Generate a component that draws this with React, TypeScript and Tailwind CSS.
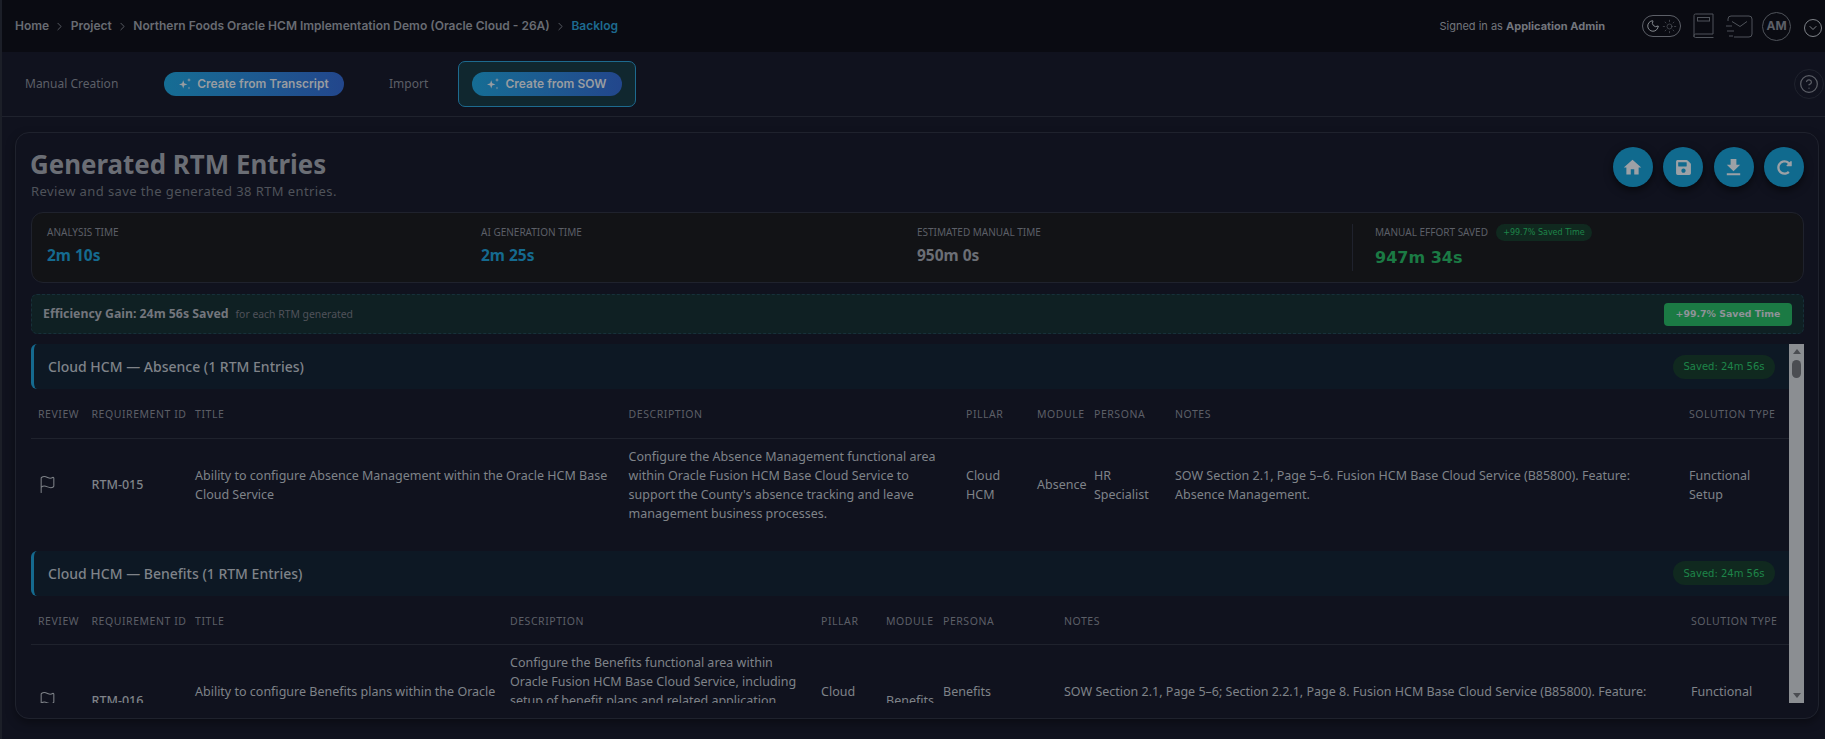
import React from "react";
import { MdHome, MdFileDownload } from "react-icons/md";
import { FaSave, FaRedoAlt } from "react-icons/fa";
import { ChevronRight, ChevronDown, Flag, Moon, Sun, CircleHelp } from "lucide-react";

const ui = "font-['Noto_Sans','Open_Sans',sans-serif]";
const head = "font-['Inter','Liberation_Sans',sans-serif]";
const wide = "font-['DejaVu_Sans',sans-serif]";

function Crumb({ children, last }: { children: React.ReactNode; last?: boolean }) {
  return (
    <>
      <span className={last ? "text-[#1d6a8f]" : "text-[#686b72]"}>{children}</span>
      {!last && <ChevronRight className="mx-[4.3px] text-[#686b72]" size={13} strokeWidth={1.5} />}
    </>
  );
}

function SparkIcon() {
  return (
    <svg width="12" height="12" viewBox="0 0 12 12" fill="currentColor" className="shrink-0">
      <path d="M4.2 2.2L5.2 5.3L8.4 6.4L5.2 7.5L4.2 10.6L3.2 7.5L0 6.4L3.2 5.3Z" />
      <path d="M10 0L10.5 1.5L12 2L10.5 2.5L10 4L9.5 2.5L8 2L9.5 1.5Z" />
      <path d="M10 8.6L10.35 9.65L11.4 10L10.35 10.35L10 11.4L9.65 10.35L8.6 10L9.65 9.65Z" />
    </svg>
  );
}

function GradientButton({ children, w }: { children: React.ReactNode; w: string }) {
  return (
    <div className={`flex h-[24px] items-center justify-center gap-[6px] rounded-full bg-gradient-to-r from-[#156d94] to-[#22468c] text-[12px] font-semibold text-[#989ca1] ${w} ${head}`}>
      <SparkIcon />
      {children}
    </div>
  );
}

function RoundAction({ children }: { children: React.ReactNode }) {
  return (
    <div className="flex h-[40px] w-[40px] items-center justify-center rounded-full bg-[#106a8e] text-[#9ca1a6] shadow-[0_3px_8px_rgba(0,0,0,0.6)]">
      {children}
    </div>
  );
}

function Stat({ label, value, w, color }: { label: string; value: string; w: string; color: string }) {
  return (
    <div className={`${w} pb-[5px]`}>
      <div className="text-[10px] leading-[14px] text-[#5c5f67]">{label}</div>
      <div className={`mt-[6px] text-[15.5px] font-bold leading-[20px] ${color}`}>{value}</div>
    </div>
  );
}

function SectionHead({ title }: { title: string }) {
  return (
    <div className="flex h-[45px] items-center justify-between rounded-l-[6px] border-l-[3px] border-[#156a8f] bg-[#0d1824] pl-[14px] pr-[14px]">
      <span className="text-[14px] font-medium text-[#7f8389]">{title}</span>
      <span className={`flex h-[24px] w-[102px] items-center justify-center rounded-full bg-[#10291f] text-[10px] text-[#1e8549] ${wide}`}>
        Saved: 24m 56s
      </span>
    </div>
  );
}

type Row = { id: string; title: string; desc: string; pillar: string; module: string; persona: string; notes: string; sol: string };
const headers = ["REVIEW", "REQUIREMENT ID", "TITLE", "DESCRIPTION", "PILLAR", "MODULE", "PERSONA", "NOTES", "SOLUTION TYPE"];

function RtmTable({ widths, row }: { widths: number[]; row: Row }) {
  const td = "px-[7px] py-[8px] align-middle";
  return (
    <table className="w-full table-fixed border-collapse text-[12.5px] leading-[19px] text-[#7f8389]">
      <colgroup>
        {widths.map((w, i) => (
          <col key={i} style={{ width: w }} />
        ))}
      </colgroup>
      <thead>
        <tr className="h-[49px] border-b border-[#1f222d]">
          {headers.map((h) => (
            <th key={h} className="overflow-visible whitespace-nowrap px-[7px] pt-[3px] text-left text-[10.5px] font-normal tracking-[0.55px] text-[#5c5f67]">
              {h}
            </th>
          ))}
        </tr>
      </thead>
      <tbody>
        <tr>
          <td className={td}>
            <Flag size={19} strokeWidth={1.3} />
          </td>
          <td className={`${td} font-medium`}>{row.id}</td>
          <td className={td}>{row.title}</td>
          <td className={td}>{row.desc}</td>
          <td className={td}>{row.pillar}</td>
          <td className={td}>{row.module}</td>
          <td className={td}>{row.persona}</td>
          <td className={td}>{row.notes}</td>
          <td className={td}>{row.sol}</td>
        </tr>
      </tbody>
    </table>
  );
}

export default function App() {
  return (
    <div className={`flex h-[739px] w-[1825px] flex-col overflow-hidden border-l-2 border-[#1c1f28] bg-[#10121e] ${ui}`}>
      <header className={`flex h-[52px] shrink-0 items-center bg-[#0a0b12] pl-[13px] pr-[3px] ${head}`}>
        <nav className="flex items-center text-[12px] font-semibold">
          <Crumb>Home</Crumb>
          <Crumb>Project</Crumb>
          <Crumb>Northern Foods Oracle HCM Implementation Demo (Oracle Cloud - 26A)</Crumb>
          <Crumb last>Backlog</Crumb>
        </nav>
        <div className="ml-auto mr-[37px] text-[11px] text-[#73767d]">
          Signed in as <span className="font-bold">Application Admin</span>
        </div>
        <div className="flex h-[22px] w-[39px] items-center justify-center gap-[2px] rounded-full border border-[#5c5f67]">
          <Moon size={14} strokeWidth={1.6} className="text-[#8f9399]" />
          <Sun size={15} strokeWidth={1} className="text-[#5c5f67]" />
        </div>
        <svg className="ml-[12px] text-[#4f535a]" width="21" height="26" viewBox="0 0 21 26" fill="none" stroke="currentColor" strokeWidth="1">
          <path d="M1 24V2.5A1.5 1.5 0 0 1 2.5 1H20V21H2.5A1.5 1.5 0 0 0 1 22.5A1.5 1.5 0 0 0 2.5 24.5H20.5" />
          <rect x="4.5" y="4.5" width="12" height="3.5" />
        </svg>
        <svg className="ml-[12px] text-[#4f535a]" width="27" height="23" viewBox="0 0 27 23" fill="none" stroke="currentColor" strokeWidth="1">
          <path d="M2 6V4A3 3 0 0 1 5 1H23A3 3 0 0 1 26 4V19A3 3 0 0 1 23 22H8" />
          <path d="M6 6.5L14 11.5L21 6.5" />
          <path d="M0 11H6M1 16H8M3 21H7" />
        </svg>
        <div className="ml-[9px] flex h-[29px] w-[29px] items-center justify-center rounded-full border border-[#4f535a] text-[12px] font-bold text-[#5c5f67]">AM</div>
        <div className="ml-[13px] mt-[4px] flex h-[18px] w-[18px] items-center justify-center rounded-full border border-[#7f8389] text-[#7f8389]">
          <ChevronDown size={12} strokeWidth={2} />
        </div>
      </header>

      <div className="flex h-[65px] shrink-0 items-center border-b border-[#1f222d] pl-[23px] pr-[1px] text-[12px]">
        <span className="w-[139px] text-[#5c5f67]">Manual Creation</span>
        <GradientButton w="w-[180px]">Create from Transcript</GradientButton>
        <span className="ml-[45px] w-[69px] text-[#5c5f67]">Import</span>
        <div className="flex h-[46px] w-[178px] items-center justify-center rounded-[7px] border border-[#1d6a8f] bg-[#10272f]">
          <GradientButton w="w-[150px]">Create from SOW</GradientButton>
        </div>
        <div className="ml-auto flex h-[30px] w-[30px] items-center justify-center rounded-full border border-[#1f222d] text-[#5c5f67]">
          <CircleHelp size={20} strokeWidth={1.5} />
        </div>
      </div>

      <main className="mb-[20px] ml-[13px] mr-[6px] mt-[15px] flex min-h-0 flex-1 flex-col rounded-[14px] border border-[#1f222d] pb-[15px] pl-[15px] pr-[14px] shadow-[0_4px_10px_rgba(0,0,0,0.35)]">
        <div className="flex h-[79px] shrink-0 items-start justify-between pt-[13px]">
          <div>
            <h1 className="-ml-[1px] text-[25.9px] font-bold leading-[37px] text-[#6b6e75]">Generated RTM Entries</h1>
            <p className="text-[13px] leading-[16px] tracking-[0.4px] text-[#4f525a]">Review and save the generated 38 RTM entries.</p>
          </div>
          <div className="mt-[1px] flex gap-[10.5px]">
            <RoundAction><MdHome size={21} /></RoundAction>
            <RoundAction><FaSave size={17} /></RoundAction>
            <RoundAction><MdFileDownload size={23} /></RoundAction>
            <RoundAction><FaRedoAlt size={15} /></RoundAction>
          </div>
        </div>

        <div className="flex h-[71px] shrink-0 items-center rounded-[12px] border border-[#1f222d] bg-[#121316] pl-[15px]">
          <Stat w="w-[434px]" label="ANALYSIS TIME" value="2m 10s" color="text-[#156a8f]" />
          <Stat w="w-[436px]" label="AI GENERATION TIME" value="2m 25s" color="text-[#156a8f]" />
          <Stat w="w-[435px]" label="ESTIMATED MANUAL TIME" value="950m 0s" color="text-[#6b6e75]" />
          <div className="flex h-[47px] flex-col justify-start border-l border-[#1f222d] pl-[22px]">
            <div className="flex h-[17px] items-center gap-[8px]">
              <span className="text-[10px] text-[#5c5f67]">MANUAL EFFORT SAVED</span>
              <span className={`flex h-[17px] w-[96px] items-center justify-center rounded-full bg-[#10291f] text-[8px] text-[#1e8549] ${wide}`}>+99.7% Saved Time</span>
            </div>
            <div className={`mt-[6px] text-[16px] font-bold leading-[22px] text-[#1b7a44] ${wide}`}>947m 34s</div>
          </div>
        </div>

        <div className="mt-[11px] flex h-[40px] shrink-0 items-center justify-between rounded-[6px] border border-dashed border-[#17303a] bg-[#0f2023] pl-[11px] pr-[11px]">
          <div className="flex items-baseline gap-[7px]">
            <span className="text-[12.3px] font-bold text-[#73767d]">Efficiency Gain: 24m 56s Saved</span>
            <span className="text-[10.4px] text-[#4f525a]">for each RTM generated</span>
          </div>
          <span className={`flex h-[23px] w-[128px] items-center justify-center rounded-[4px] bg-[#1b7a44] text-[9.4px] font-bold text-[#8f9399] ${wide}`}>+99.7% Saved Time</span>
        </div>

        <div className="mt-[10px] flex min-h-0 flex-1 overflow-hidden">
          <div className="min-w-0 flex-1 overflow-hidden">
            <SectionHead title="Cloud HCM — Absence (1 RTM Entries)" />
            <RtmTable
              widths={[53.5, 103.5, 433.6, 337.4, 71, 57, 81, 514, 107]}
              row={{
                id: "RTM-015",
                title: "Ability to configure Absence Management within the Oracle HCM Base Cloud Service",
                desc: "Configure the Absence Management functional area within Oracle Fusion HCM Base Cloud Service to support the County's absence tracking and leave management business processes.",
                pillar: "Cloud HCM",
                module: "Absence",
                persona: "HR Specialist",
                notes: "SOW Section 2.1, Page 5–6. Fusion HCM Base Cloud Service (B85800). Feature: Absence Management.",
                sol: "Functional Setup",
              }}
            />
            <div className="mt-[20px]">
              <SectionHead title="Cloud HCM — Benefits (1 RTM Entries)" />
            </div>
            <RtmTable
              widths={[53.5, 103.5, 315, 311, 65, 57, 121, 627, 105]}
              row={{
                id: "RTM-016",
                title: "Ability to configure Benefits plans within the Oracle HCM Base Cloud Service",
                desc: "Configure the Benefits functional area within Oracle Fusion HCM Base Cloud Service, including setup of benefit plans and related application components to support the County's benefits administration processes.",
                pillar: "Cloud HCM",
                module: "Benefits",
                persona: "Benefits Administrator",
                notes: "SOW Section 2.1, Page 5–6; Section 2.2.1, Page 8. Fusion HCM Base Cloud Service (B85800). Feature: Benefits Plan Configuration and Eligibility.",
                sol: "Functional Setup",
              }}
            />
          </div>
          <div className="flex w-[15px] shrink-0 flex-col items-center bg-[#8b8e92] py-[5px]">
            <div className="h-0 w-0 border-x-[4px] border-b-[5px] border-x-transparent border-b-[#4b4d52]" />
            <div className="mt-[6px] h-[18px] w-[9px] rounded-full bg-[#4b4d52]" />
            <div className="mt-auto h-0 w-0 border-x-[4px] border-t-[5px] border-x-transparent border-t-[#4b4d52]" />
          </div>
        </div>
      </main>
    </div>
  );
}
